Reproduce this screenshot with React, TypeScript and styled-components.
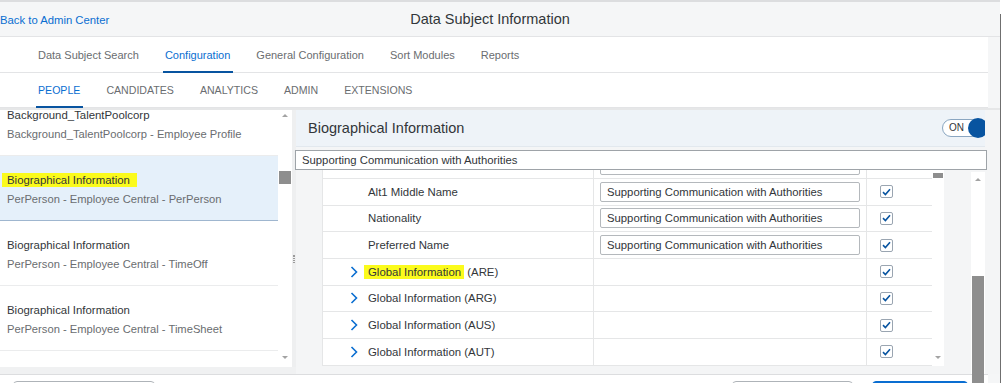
import styled, { createGlobalStyle } from 'styled-components';

const GlobalStyle = createGlobalStyle`
  html, body { margin: 0; padding: 0; background: #ffffff; }
  body { font-family: "Liberation Sans", Arial, sans-serif; color: #32363a; }
  * { box-sizing: border-box; }
`;

const Page = styled.div`
  display: flex;
  width: 1003px;
  height: 383px;
  overflow: hidden;
  background: #ffffff;
`;

const Frame = styled.div`
  width: 1000px;
  height: 383px;
  display: flex;
  flex-direction: column;
  background: #f5f6f7;
  border-top: 2px solid #dcdddf;
  & > * { flex-shrink: 0; }
`;

const WindowEdge = styled.div`
  width: 1px;
  margin-top: 14px;
  background: #6f6f6f;
`;

const TopBar = styled.div`
  height: 35px;
  display: grid;
  grid-template-columns: 1fr auto 1fr;
  align-items: center;
  padding-right: 20px;
  border-bottom: 1px solid #e3e4e6;
`;

const BackLink = styled.a`
  font-size: 11.3px;
  color: #0a6ed1;
  text-decoration: none;
`;

const Title = styled.div`
  font-size: 14.5px;
  color: #32363a;
`;

const TabBlock = styled.div`
  width: 988px;
  background: #ffffff;
`;

const TabRow = styled.div<{ $h: number }>`
  height: ${(p) => p.$h}px;
  display: flex;
  align-items: stretch;
  gap: 26px;
  padding-left: 38px;
  border-bottom: 1px solid #e3e4e6;
`;

const Tab = styled.div<{ $active?: boolean; $caps?: boolean }>`
  position: relative;
  display: flex;
  align-items: center;
  font-size: ${(p) => (p.$caps ? '10.6px' : '11px')};
  color: ${(p) => (p.$active ? '#0a6ed1' : '#6a6d70')};
  text-transform: ${(p) => (p.$caps ? 'uppercase' : 'none')};
  &::after {
    content: '';
    display: ${(p) => (p.$active ? 'block' : 'none')};
    position: absolute;
    left: -2px;
    right: -3px;
    bottom: -1px;
    height: 2px;
    background: #0854a0;
  }
`;

const Shade = styled.div`
  height: 2px;
  background: #e6e7e8;
`;

const Body = styled.div`
  position: relative;
  height: 264px;
  display: flex;
`;

const LeftPane = styled.div`
  width: 296px;
  display: flex;
  flex-direction: column;
  background: #f0f1f2;
`;

const LeftTop = styled.div`
  height: 257px;
  display: flex;
`;

const List = styled.div`
  width: 278px;
  overflow: hidden;
  background: #ffffff;
`;

const ListInner = styled.div`
  margin-top: -19px;
`;

const Item = styled.div<{ $selected?: boolean }>`
  height: 65px;
  padding: 16px 0 0 7px;
  background: ${(p) => (p.$selected ? '#e5f0fa' : '#ffffff')};
  border-bottom: 1px solid ${(p) => (p.$selected ? '#9fb6cf' : '#ebeced')};
`;

const ItemTitle = styled.div`
  font-size: 11.4px;
  line-height: 16px;
  color: #32363a;
`;

const ItemSub = styled.div`
  margin-top: 3px;
  font-size: 11.2px;
  line-height: 16px;
  color: #6a6d70;
`;

const Marker = styled.span`
  background: #fbfb1c;
  padding: 1px 7px 1px 5px;
  margin-left: -5px;
`;

const ScrollCol = styled.div<{ $w: number; $bg?: string }>`
  position: relative;
  width: ${(p) => p.$w}px;
  flex-shrink: 0;
  background: ${(p) => p.$bg || '#ffffff'};
`;

const Arrow = styled.div<{ $up?: boolean; $top?: number; $bottom?: number }>`
  position: absolute;
  left: 50%;
  margin-left: -3px;
  ${(p) => (p.$top !== undefined ? `top: ${p.$top}px;` : '')}
  ${(p) => (p.$bottom !== undefined ? `bottom: ${p.$bottom}px;` : '')}
  width: 0;
  height: 0;
  border-left: 3px solid transparent;
  border-right: 3px solid transparent;
  ${(p) => (p.$up ? 'border-bottom: 3px solid #a3a3a3;' : 'border-top: 3px solid #a3a3a3;')}
`;

const Thumb = styled.div<{ $top: number; $h: number; $bottom?: number }>`
  position: absolute;
  left: 1px;
  right: 1px;
  top: ${(p) => p.$top}px;
  ${(p) => (p.$bottom !== undefined ? `bottom: ${p.$bottom}px;` : `height: ${p.$h}px;`)}
  background: #8e8e8e;
  z-index: 2;
`;

const Splitter = styled.div`
  width: 4px;
  background: #eeeff0;
  display: flex;
  justify-content: center;
  padding-top: 145px;
`;

const Grip = styled.div`
  width: 2px;
  height: 8px;
  border-left: 1px dotted #9a9a9a;
  border-right: 1px dotted #9a9a9a;
`;

const RightPane = styled.div`
  flex: 1;
  display: flex;
  flex-direction: column;
  background: #f4f5f6;
  padding-right: 15px;
`;

const PaneHeader = styled.div`
  height: 37px;
  flex-shrink: 0;
  display: flex;
  align-items: center;
  justify-content: space-between;
  padding-left: 12px;
  background: #eef3f8;
  border-bottom: 1px solid #e2e8ee;
  overflow: hidden;
`;

const PaneTitle = styled.div`
  font-size: 14.5px;
  color: #32363a;
`;

const Toggle = styled.div`
  position: relative;
  width: 46px;
  height: 18px;
  margin-right: -3px;
  border: 1px solid #8aa6c1;
  border-radius: 9px;
  background: #ffffff;
  font-size: 10px;
  line-height: 16px;
  padding-left: 6px;
  color: #32363a;
  &::after {
    content: '';
    position: absolute;
    right: -1px;
    top: -2px;
    width: 20px;
    height: 20px;
    border-radius: 50%;
    background: #0854a0;
  }
`;

const TextInput = styled.div<{ $wide?: boolean }>`
  height: 20px;
  border: 1px solid ${(p) => (p.$wide ? '#9ea3a8' : '#b4b8bc')};
  border-radius: ${(p) => (p.$wide ? '0' : '2px')};
  background: #ffffff;
  font-size: 11.3px;
  line-height: 18px;
  padding-left: 6px;
  color: #32363a;
  white-space: nowrap;
  overflow: hidden;
`;

const FilterRow = styled.div`
  flex-shrink: 0;
  margin: 3px -2px 0 -1px;
`;

const TableRegion = styled.div`
  flex: 1;
  display: flex;
  align-items: flex-start;
  padding-left: 26px;
`;

const TableWrap = styled.div`
  width: 610px;
  height: 196px;
  overflow: hidden;
  background: #ffffff;
  border-left: 1px solid #e5e6e7;
  border-bottom: 1px solid #e5e6e7;
`;

const TableInner = styled.div`
  margin-top: -17.67px;
`;

const Row = styled.div`
  height: 26.67px;
  display: grid;
  grid-template-columns: 271px 273px 66px;
  border-bottom: 1px solid #e5e6e7;
`;

const Cell = styled.div`
  display: flex;
  align-items: center;
  border-right: 1px solid #e5e6e7;
  font-size: 11.4px;
  color: #32363a;
`;

const NameCell = styled(Cell)`
  padding-left: 25px;
`;

const ValueCell = styled(Cell)`
  padding: 0 6px 0 6px;
  & > div { flex: 1; }
`;

const CheckCell = styled(Cell)`
  padding-left: 13px;
`;

const Slot = styled.span`
  width: 20px;
  height: 12px;
  flex-shrink: 0;
  display: flex;
  align-items: center;
`;

const Box = styled.span`
  width: 13px;
  height: 13px;
  border: 1px solid #9aa5b1;
  border-radius: 2px;
  display: flex;
  align-items: center;
  justify-content: center;
  background: #ffffff;
`;

const InnerScroll = styled(ScrollCol)`
  height: 196px;
`;

const Spacer = styled.div`
  width: 27px;
`;

const OuterScroll = styled(ScrollCol)`
  align-self: stretch;
  margin-top: 2px;
`;

const Footer = styled.div`
  height: 9px;
  width: 988px;
  overflow: hidden;
  background: #ffffff;
  border-top: 1px solid #dcdddf;
  display: flex;
  padding: 6px 0 0 13px;
`;

const Button = styled.div<{ $w: number; $ml: number; $primary?: boolean }>`
  width: ${(p) => p.$w}px;
  height: 26px;
  margin-left: ${(p) => p.$ml}px;
  border-radius: 4px;
  border: 1px solid ${(p) => (p.$primary ? '#0a6ed1' : '#aeb3b8')};
  background: ${(p) => (p.$primary ? '#0a6ed1' : '#ffffff')};
  flex-shrink: 0;
`;

const listItems = [
  { title: 'Background_TalentPoolcorp', sub: 'Background_TalentPoolcorp - Employee Profile' },
  { title: 'Biographical Information', sub: 'PerPerson - Employee Central - PerPerson', selected: true },
  { title: 'Biographical Information', sub: 'PerPerson - Employee Central - TimeOff' },
  { title: 'Biographical Information', sub: 'PerPerson - Employee Central - TimeSheet' },
];

const VALUE = 'Supporting Communication with Authorities';

type Field = { name: string; value?: string; input?: boolean; group?: boolean; check?: boolean; mark?: boolean };

// first row is scrolled almost out of view: only the bottom edge of its input shows
const fields: Field[] = [
  { name: '', input: true },
  { name: 'Alt1 Middle Name', value: VALUE, input: true, check: true },
  { name: 'Nationality', value: VALUE, input: true, check: true },
  { name: 'Preferred Name', value: VALUE, input: true, check: true },
  { name: 'Global Information (ARE)', group: true, check: true, mark: true },
  { name: 'Global Information (ARG)', group: true, check: true },
  { name: 'Global Information (AUS)', group: true, check: true },
  { name: 'Global Information (AUT)', group: true, check: true },
];

const Chevron = () => (
  <svg width="8" height="12" viewBox="0 0 8 12" style={{ marginLeft: 2 }}>
    <path d="M1.5 1 L6.5 6 L1.5 11" fill="none" stroke="#0a6ed1" strokeWidth="1.6" />
  </svg>
);

const Check = () => (
  <svg width="9" height="8" viewBox="0 0 9 8">
    <path d="M1 4.2 L3.4 6.5 L8 1.2" fill="none" stroke="#0854a0" strokeWidth="1.6" />
  </svg>
);

const FieldName = ({ f }: { f: Field }) => {
  if (!f.mark) return <>{f.name}</>;
  return (
    <>
      <Marker style={{ padding: '1px 3px 1px 4px', marginLeft: -4 }}>Global Information</Marker>&nbsp;(ARE)
    </>
  );
};

export default function App() {
  return (
    <Page>
      <GlobalStyle />
      <Frame>
        <TopBar>
          <div><BackLink>Back to Admin Center</BackLink></div>
          <Title>Data Subject Information</Title>
          <div />
        </TopBar>
        <TabBlock>
          <TabRow $h={36}>
            <Tab>Data Subject Search</Tab>
            <Tab $active>Configuration</Tab>
            <Tab>General Configuration</Tab>
            <Tab>Sort Modules</Tab>
            <Tab>Reports</Tab>
          </TabRow>
          <TabRow $h={35}>
            <Tab $caps $active>People</Tab>
            <Tab $caps>Candidates</Tab>
            <Tab $caps>Analytics</Tab>
            <Tab $caps>Admin</Tab>
            <Tab $caps>Extensions</Tab>
          </TabRow>
        </TabBlock>
        <Shade />
        <Body>
          <LeftPane>
            <LeftTop>
              <List>
                <ListInner>
                  {listItems.map((it, i) => (
                    <Item key={i} $selected={it.selected}>
                      <ItemTitle>{it.selected ? <Marker>{it.title}</Marker> : it.title}</ItemTitle>
                      <ItemSub>{it.sub}</ItemSub>
                    </Item>
                  ))}
                </ListInner>
              </List>
              <ScrollCol $w={14}>
                <Arrow $up $top={4} />
                <Thumb $top={61} $h={13} />
                <Arrow $bottom={8} />
              </ScrollCol>
              <Splitter>
                <Grip />
              </Splitter>
            </LeftTop>
          </LeftPane>
          <RightPane>
            <PaneHeader>
              <PaneTitle>Biographical Information</PaneTitle>
              <Toggle>ON</Toggle>
            </PaneHeader>
            <FilterRow>
              <TextInput $wide>{VALUE}</TextInput>
            </FilterRow>
            <TableRegion>
              <TableWrap>
                <TableInner>
                  {fields.map((f, i) => (
                    <Row key={i}>
                      <NameCell>
                        <Slot>{f.group && <Chevron />}</Slot>
                        <FieldName f={f} />
                      </NameCell>
                      <ValueCell>{f.input && <TextInput>{f.value}</TextInput>}</ValueCell>
                      <CheckCell>
                        {f.check && (
                          <Box>
                            <Check />
                          </Box>
                        )}
                      </CheckCell>
                    </Row>
                  ))}
                </TableInner>
              </TableWrap>
              <InnerScroll $w={12}>
                <Thumb $top={3} $h={5} />
                <Arrow $bottom={7} />
              </InnerScroll>
              <Spacer />
              <OuterScroll $w={14}>
                <Arrow $up $top={6} />
                <Thumb $top={104} $h={0} $bottom={-9} />
              </OuterScroll>
            </TableRegion>
          </RightPane>
        </Body>
        <Footer>
          <Button $w={142} $ml={0} />
          <Button $w={121} $ml={577} />
          <Button $w={96} $ml={19} $primary />
        </Footer>
      </Frame>
      <WindowEdge />
    </Page>
  );
}
